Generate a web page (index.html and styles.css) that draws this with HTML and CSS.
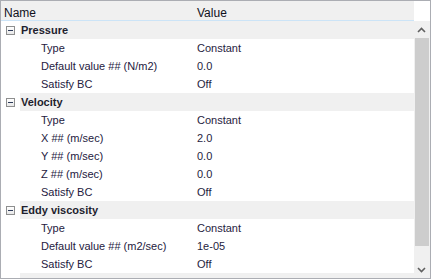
FILE: index.html
```html
<!DOCTYPE html>
<html lang="en">
<head>
    <meta charset="UTF-8">
    <title>Properties</title>
    <link rel="stylesheet" href="styles.css">
</head>
<body>
<div id="grid">
    <div id="header">
        <div class="hname">Name</div>
        <div class="hvalue">Value</div>
    </div>
    <div id="corpo">
        <div id="linhas">
            <div class="group"><div class="exp"><span class="box"></span></div><div class="gname">Pressure</div></div>
            <div class="prop"><div class="exp"></div><div class="pname">Type</div><div class="pvalue">Constant</div></div>
            <div class="prop"><div class="exp"></div><div class="pname">Default value ## (N/m2)</div><div class="pvalue">0.0</div></div>
            <div class="prop"><div class="exp"></div><div class="pname">Satisfy BC</div><div class="pvalue">Off</div></div>

            <div class="group"><div class="exp"><span class="box"></span></div><div class="gname">Velocity</div></div>
            <div class="prop"><div class="exp"></div><div class="pname">Type</div><div class="pvalue">Constant</div></div>
            <div class="prop"><div class="exp"></div><div class="pname">X ## (m/sec)</div><div class="pvalue">2.0</div></div>
            <div class="prop"><div class="exp"></div><div class="pname">Y ## (m/sec)</div><div class="pvalue">0.0</div></div>
            <div class="prop"><div class="exp"></div><div class="pname">Z ## (m/sec)</div><div class="pvalue">0.0</div></div>
            <div class="prop"><div class="exp"></div><div class="pname">Satisfy BC</div><div class="pvalue">Off</div></div>

            <div class="group"><div class="exp"><span class="box"></span></div><div class="gname">Eddy viscosity</div></div>
            <div class="prop"><div class="exp"></div><div class="pname">Type</div><div class="pvalue">Constant</div></div>
            <div class="prop"><div class="exp"></div><div class="pname">Default value ## (m2/sec)</div><div class="pvalue">1e-05</div></div>
            <div class="prop"><div class="exp"></div><div class="pname">Satisfy BC</div><div class="pvalue">Off</div></div>

            <div class="group"><div class="exp"></div><div class="gname"></div></div>
        </div>
        <div id="scroll">
            <div class="seta">
                <svg width="9" height="6" viewBox="0 0 9 6"><polyline points="1,5 4.5,1.5 8,5" fill="none" stroke="#606060" stroke-width="1.6"/></svg>
            </div>
            <div class="thumb"></div>
            <div class="trilho"></div>
            <div class="seta">
                <svg width="9" height="6" viewBox="0 0 9 6"><polyline points="1,1 4.5,4.5 8,1" fill="none" stroke="#606060" stroke-width="1.6"/></svg>
            </div>
        </div>
    </div>
</div>
</body>
</html>
```

FILE: styles.css
```css
* {
    box-sizing: border-box;
}

body {
    margin: 0;
    background-color: white;
    font-family: "Liberation Sans", Arial, sans-serif;
    font-size: 11px;
}

#grid {
    width: 431px;
    height: 279px;
    border: 1px solid #abadb3;
    display: flex;
    flex-direction: column;
    overflow: hidden;
}

#header {
    height: 20px;
    flex: none;
    display: flex;
    background-color: #f0f0f0;
    border-bottom: 1px solid #cce4f7;
    margin-right: 16px;
    font-size: 12px;
    line-height: 14px;
    padding-top: 5px;
    color: #101020;
}

.hname {
    width: 195px;
    padding-left: 3px;
}

.hvalue {
    padding-left: 1px;
}

#corpo {
    flex: 1;
    display: flex;
    min-height: 0;
}

#linhas {
    flex: 1;
    overflow: hidden;
}

.group, .prop {
    height: 18px;
    line-height: 18px;
    display: flex;
}

.exp {
    width: 19px;
    flex: none;
    background-color: white;
    display: flex;
    justify-content: center;
    padding-top: 5px;
    padding-right: 1px;
}

.box {
    width: 9px;
    height: 9px;
    border: 1px solid #8e8f8f;
    background: linear-gradient(#ffffff, #e8e8e8);
    position: relative;
}

.box::after {
    content: "";
    position: absolute;
    left: 1px;
    top: 3px;
    width: 5px;
    height: 1px;
    background-color: #2c3a58;
}

.gname {
    flex: 1;
    background-color: #f0f0f0;
    padding-left: 1px;
    font-weight: bold;
    color: #1e1e2e;
}

.pname {
    width: 177px;
    flex: none;
    padding-left: 21px;
    color: #24203e;
    white-space: nowrap;
}

.pvalue {
    flex: 1;
    color: #1f2340;
}

#scroll {
    width: 16px;
    flex: none;
    background-color: #f0f0f0;
    display: flex;
    flex-direction: column;
}

.seta {
    height: 17px;
    flex: none;
    display: flex;
    align-items: center;
    justify-content: center;
    padding-right: 1px;
}

.thumb {
    height: 208px;
    flex: none;
    margin: 0 1px 0 1px;
    background-color: #cdcdcd;
}

.trilho {
    flex: 1;
}
```
